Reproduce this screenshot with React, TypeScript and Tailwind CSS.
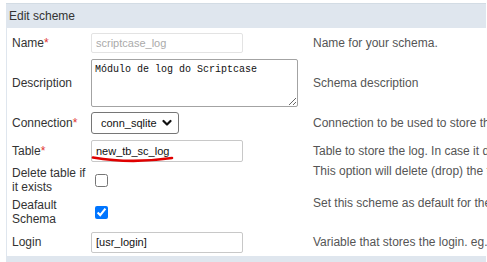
import React from "react";

function Label({ text, req }: { text: string; req?: boolean }) {
  return (
    <div className="w-[84px] shrink-0 pl-[5px] text-[12px] leading-[14px] text-[#333]">
      {text}
      {req && <span className="text-[#e0332f]">*</span>}
    </div>
  );
}

function Help({ text, top }: { text: string; top?: boolean }) {
  return (
    <div className={"pl-0 text-[12px] leading-[14px] text-[#555] whitespace-nowrap " + (top ? "self-start" : "")}>
      {text}
    </div>
  );
}

export default function App() {
  return (
    <div className="w-[487px] h-[262px] overflow-hidden bg-white pt-[3px] pl-[6px] font-['Liberation_Sans',Arial,sans-serif]">
      <div className="w-[480px] h-[25px] bg-[#dfe6ee] border-t border-[#d3dce4] flex items-center pl-[3px] text-[12px] text-[#333]">
        Edit scheme
      </div>
      <div className="w-[480px] border-l border-[#dfe6ee] flex flex-col">
        {/* Name */}
        <div className="h-[30px] flex items-center">
          <Label text="Name" req />
          <div className="w-[222px] shrink-0">
            <div className="w-[152px] h-[20px] border border-[#e3e3e3] rounded-[2px] flex items-center px-[4px] text-[11px] text-[#aaa]">
              scriptcase_log
            </div>
          </div>
          <Help text="Name for your schema." />
        </div>
        {/* Description */}
        <div className="h-[50px] flex items-center">
          <Label text="Description" />
          <div className="w-[222px] shrink-0 flex">
            <textarea
              readOnly
              defaultValue="Módulo de log do Scriptcase"
              className="w-[207px] h-[48px] border border-[#a3a3a3] rounded-[2px] p-[3px] text-[10px] leading-[13px] text-[#111] font-['Liberation_Mono','DejaVu_Sans_Mono',monospace] outline-none"
            />
          </div>
          <Help text="Schema description" />
        </div>
        {/* Connection */}
        <div className="h-[30px] flex items-center">
          <Label text="Connection" req />
          <div className="w-[222px] shrink-0">
            <div className="w-[88px] h-[22px] border border-[#767676] rounded-[3px] flex items-center justify-between pl-[9px] pr-[6px] text-[11px] text-[#111]">
              <span>conn_sqlite</span>
              <svg width="10" height="8" viewBox="0 0 10 8">
                <path d="M1.5 2 L5 5.5 L8.5 2" fill="none" stroke="#111" strokeWidth="2.2" strokeLinecap="round" strokeLinejoin="round" />
              </svg>
            </div>
          </div>
          <Help text="Connection to be used to store the log." />
        </div>
        {/* Table */}
        <div className="h-[26px] flex items-center">
          <Label text="Table" req />
          <div className="w-[222px] shrink-0 relative h-[26px] flex items-center">
            <div className="w-[152px] h-[22px] border border-[#c8c8c8] rounded-[2px] flex items-center px-[4px] text-[11px] text-[#111]">
              new_tb_sc_log
            </div>
            <svg className="absolute left-0 top-0" width="100" height="26" viewBox="0 0 100 26">
              <path d="M2 19.5 Q40 26 81 20" fill="none" stroke="#e00000" strokeWidth="2.6" strokeLinecap="round" />
            </svg>
          </div>
          <Help text="Table to store the log. In case it does not exist, it will be created." />
        </div>
        {/* Delete */}
        <div className="h-[32px] flex items-center">
          <Label text="Delete table if it exists" />
          <div className="w-[222px] shrink-0 flex items-center">
            <input type="checkbox" className="m-0 ml-[4px] w-[13px] h-[13px]" />
          </div>
          <Help text="This option will delete (drop) the table if it exists." top />
        </div>
        {/* Default */}
        <div className="h-[32px] flex items-center">
          <Label text="Deafault Schema" />
          <div className="w-[222px] shrink-0 flex items-center">
            <input type="checkbox" defaultChecked className="m-0 ml-[4px] w-[13px] h-[13px]" />
          </div>
          <Help text="Set this scheme as default for the application." top />
        </div>
        {/* Login */}
        <div className="h-[28px] flex items-center">
          <Label text="Login" />
          <div className="w-[222px] shrink-0">
            <div className="w-[152px] h-[21px] border border-[#c8c8c8] rounded-[2px] flex items-center px-[4px] text-[11px] text-[#111]">
              [usr_login]
            </div>
          </div>
          <Help text="Variable that stores the login. eg. [usr_login]" />
        </div>
      </div>
      <div className="w-[480px] h-[6px] bg-[#dfe6ee]" />
    </div>
  );
}
